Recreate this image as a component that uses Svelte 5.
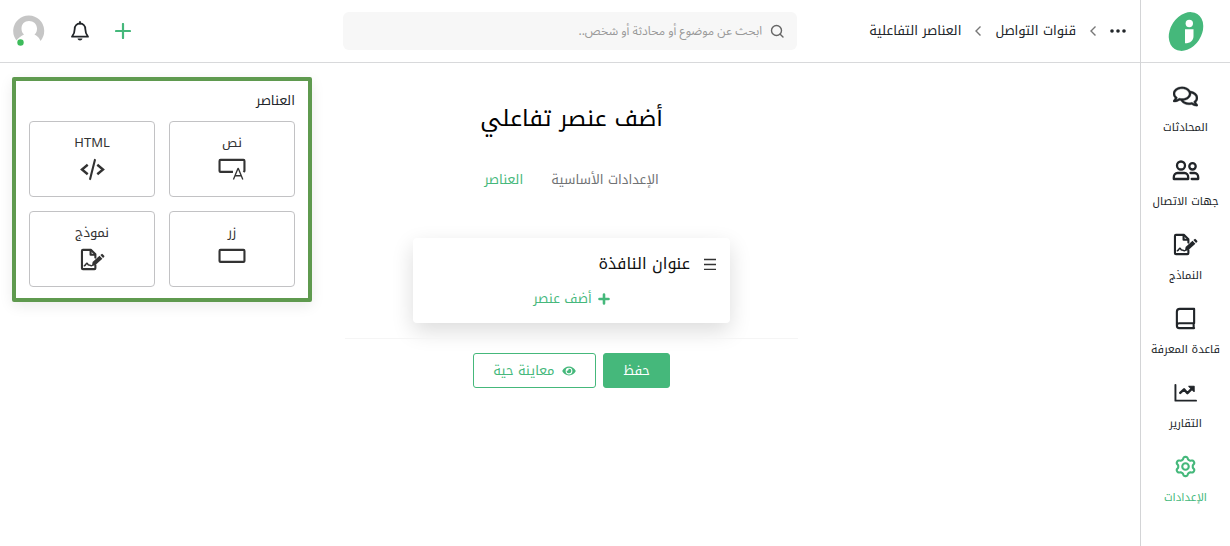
<script>
  const navItems = [
    { id: 'chats', label: 'المحادثات' },
    { id: 'contacts', label: 'جهات الاتصال' },
    { id: 'forms', label: 'النماذج' },
    { id: 'book', label: 'قاعدة المعرفة' },
    { id: 'reports', label: 'التقارير' },
    { id: 'settings', label: 'الإعدادات' }
  ];
  const elements = [
    { id: 'text', label: 'نص' },
    { id: 'html', label: 'HTML' },
    { id: 'button', label: 'زر' },
    { id: 'form', label: 'نموذج' }
  ];
  let active = $state('settings');
  let query = $state('');

  // Outline of a gear with six rounded teeth around the centre of a 24-unit box.
  const gear = Array.from({ length: 96 }, (_, i) => {
    const a = (i / 96) * Math.PI * 2;
    const r = 8.8 + 1.3 * Math.tanh(1.8 * Math.cos(6 * (a + Math.PI / 2)));
    return `${i ? 'L' : 'M'}${(12 + r * Math.cos(a)).toFixed(2)} ${(12 + r * Math.sin(a)).toFixed(2)}`;
  }).join('') + 'Z';
</script>

{#snippet signature()}
  <svg class="ic" viewBox="0 0 26 24" fill="none" stroke="currentColor" stroke-width="2.200" stroke-linejoin="round" stroke-linecap="round">
    <path d="M16 18V21a1 1 0 0 1-1 1H3a1 1 0 0 1-1-1V3a1 1 0 0 1 1-1h8.500L16 6.500V10" />
    <path d="M11 2.500V7h4.500" />
    <path d="M4.500 18.500c1.500-.5 1.800-2.500 2.700-2.500s.8 1.700 1.800 1.700 1 .8 3 .8" stroke-width="1.500" />
    <path d="M12.300 19l.8-4.400 7.200-6.500 3 3.100-7.200 6.500z" fill="currentColor" stroke="none" />
    <path d="M21.200 7.400l1.100-1a1 1 0 0 1 1.400.1l1.500 1.500a1 1 0 0 1-.1 1.400l-1.100 1z" fill="currentColor" stroke="none" />
  </svg>
{/snippet}

<div class="app" dir="rtl">
  <aside>
    <a class="logo" href="#home" aria-label="الرئيسية">
      <svg viewBox="0 0 36 40" width="36" height="40">
        <ellipse cx="18" cy="20.500" rx="15.500" ry="20.800" transform="rotate(33 18 20.500)" fill="#45b87b" />
        <circle cx="21.300" cy="12.500" r="3.700" fill="#fff" />
        <path d="M17 18.300h8.500V25c0 4.500-3 7.300-8.500 7.300z" fill="#fff" />
      </svg>
    </a>
    <nav>
      {#each navItems as item (item.id)}
        <a href="#{item.id}" class:active={active === item.id} onclick={() => (active = item.id)}>
          {#if item.id === 'chats'}
            <svg class="ic" viewBox="0 0 576 512" fill="currentColor" stroke="currentColor" stroke-width="8"><path d="M532 386.200c27.500-27.100 44-61.100 44-98.200 0-80-76.500-146.100-176.200-157.900C368.300 72.500 294.300 32 208 32 93.100 32 0 103.600 0 192c0 37 16.500 71 44 98.200-15.300 30.700-37.300 54.500-37.700 54.900-6.300 6.700-8.100 16.500-4.400 25 3.600 8.500 12 14 21.200 14 53.500 0 96.700-20.200 125.200-38.800 9.200 2.100 18.700 3.700 28.400 4.900C208.100 407.600 281.800 448 368 448c20.800 0 40.800-2.400 59.800-6.800C456.300 459.700 499.400 480 553 480c9.200 0 17.500-5.500 21.200-14 3.600-8.500 1.900-18.300-4.400-25-.4-.3-22.500-24.100-37.800-54.800zm-392.800-92.300L122.100 305c-14.100 9.100-28.500 16.300-43.100 21.400 2.700-4.700 5.400-9.700 8-14.800l15.500-31.100L77.700 256C64.200 242.600 48 220.700 48 192c0-60.700 73.300-112 160-112s160 51.300 160 112-73.300 112-160 112c-16.500 0-33-1.900-49-5.600l-19.800-4.500zM498.300 352l-24.700 24.400 15.500 31.100c2.600 5.100 5.300 10.100 8 14.800-14.600-5.100-29-12.300-43.100-21.400l-17.100-11.100-19.900 4.600c-16 3.700-32.500 5.600-49 5.600-54 0-102.200-20.100-131.300-49.700C338 339.500 416 272.900 416 192c0-3.400-.4-6.700-.7-10C479.700 196.500 528 238.800 528 288c0 28.700-16.200 50.600-29.700 64z" /></svg>
          {:else if item.id === 'contacts'}
            <svg class="ic wide" viewBox="0 0 28 22" fill="none" stroke="currentColor" stroke-width="2.300" stroke-linejoin="round" stroke-linecap="round">
              <circle cx="9" cy="6" r="4" />
              <path d="M1.800 19.500v-1.800C1.800 15.500 3.300 13.500 5.500 13.500h7c2.200 0 3.700 2 3.700 4.200v1.800z" />
              <circle cx="20.500" cy="6.800" r="3.200" />
              <path d="M18.500 13.500h4c2.200 0 3.700 2 3.700 4.200v1.800h-6.500" />
            </svg>
          {:else if item.id === 'forms'}
            {@render signature()}
          {:else if item.id === 'book'}
            <svg class="ic" viewBox="0 0 24 24" fill="none" stroke="currentColor" stroke-width="2.200" stroke-linejoin="round" stroke-linecap="round">
              <path d="M21 17V2H6a3 3 0 0 0-3 3v14.500M21 17H5.500a2.500 2.500 0 0 0 0 5H21M20.500 17v5" />
            </svg>
          {:else if item.id === 'reports'}
            <svg class="ic" viewBox="0 0 24 24" fill="none" stroke="currentColor" stroke-width="2" stroke-linejoin="round" stroke-linecap="round">
              <path d="M1.500 4v16.500h21.500" />
              <path d="M6.500 12.500l4-3.800 3.500 4 5-5" stroke-width="2.500" />
              <path d="M15.500 5.500H21V11z" fill="currentColor" stroke-width="1.200" />
            </svg>
          {:else}
            <svg class="ic" viewBox="0 0 24 24" fill="none" stroke="currentColor" stroke-width="2.200" stroke-linejoin="round">
              <path d={gear} /><circle cx="12" cy="12" r="3.400" />
            </svg>
          {/if}
          <span>{item.label}</span>
        </a>
      {/each}
    </nav>
  </aside>

  <div class="page">
    <header>
      <div class="crumbs">
        <button class="dots" aria-label="المزيد">
          <svg viewBox="0 0 16 4" width="16" height="4" fill="currentColor"><circle cx="2" cy="2" r="1.800" /><circle cx="8" cy="2" r="1.800" /><circle cx="14" cy="2" r="1.800" /></svg>
        </button>
        <svg class="chev" viewBox="0 0 6 10" width="6" height="10"><path d="M5.500 .5L1 5l4.500 4.500" /></svg>
        <a href="#channels">قنوات التواصل</a>
        <svg class="chev" viewBox="0 0 6 10" width="6" height="10"><path d="M5.500 .5L1 5l4.500 4.500" /></svg>
        <a href="#interactive">العناصر التفاعلية</a>
      </div>
      <label class="search">
        <svg viewBox="0 0 14 14" width="14" height="14" fill="none" stroke="#666" stroke-width="1.400" stroke-linecap="round"><circle cx="6.500" cy="6.500" r="5" /><path d="M10.200 10.200L13 13" /></svg>
        <input type="text" bind:value={query} placeholder="ابحث عن موضوع أو محادثة أو شخص.." aria-label="بحث" />
      </label>
      <div class="actions">
        <button class="add" aria-label="إضافة"><svg viewBox="0 0 16 16" width="16" height="16"><path d="M8 1v14M1 8h14" stroke="currentColor" stroke-width="2.200" stroke-linecap="round" /></svg></button>
        <button aria-label="الإشعارات">
          <svg viewBox="0 0 18 20" width="18" height="20" fill="none" stroke="#212529" stroke-width="1.800" stroke-linejoin="round"><path d="M9 2.500c-3.200 0-5.300 2.300-5.300 5.500 0 4.500-1.300 6-2.700 7.700h16c-1.400-1.700-2.700-3.200-2.700-7.700 0-3.200-2.100-5.500-5.300-5.500z" /><path d="M9 1v1.500" stroke-linecap="round" /><path d="M6.500 17.500h5c-.3 1.300-1.200 2-2.500 2s-2.200-.7-2.500-2z" fill="#212529" stroke="none" /></svg>
        </button>
        <button aria-label="الحساب">
          <svg viewBox="0 0 32 32" width="32" height="32">
            <path d="M3.500 25.500A15.500 15.500 0 1 1 27.500 26c-1-3-3-5-6-6.500 2-1.500 2.500-4 2.500-6C24 9 20.500 6 16 6s-7.500 3-7.500 7.500c0 2.500.8 4.500 2.500 6-3 1.500-6 3.500-7.500 6z" fill="#c6c6c6" />
            <circle cx="7.500" cy="27.500" r="3.200" fill="#3dbb5b" />
          </svg>
        </button>
      </div>
    </header>

    <div class="columns">
      <div></div>
      <main>
        <h1>أضف عنصر تفاعلي</h1>
        <div class="tabs">
          <a href="#basic">الإعدادات الأساسية</a>
          <a href="#elements" class="active">العناصر</a>
        </div>
        <section class="card">
          <div class="card-title">
            <svg viewBox="0 0 12 12" width="12" height="12"><path d="M0 1.500h12M0 6.500h12M0 11.500h12" stroke="#333" stroke-width="1.400" /></svg>
            <h2>عنوان النافذة</h2>
          </div>
          <button class="add-item">
            <svg viewBox="0 0 12 12" width="12" height="12"><path d="M6 1.500v9M1.500 6h9" stroke="currentColor" stroke-width="2.600" stroke-linecap="round" /></svg>
            أضف عنصر
          </button>
        </section>
        <div class="buttons">
          <button class="save">حفظ</button>
          <button class="preview">
            <svg viewBox="0 0 576 512" width="14" height="12" fill="currentColor"><path d="M572.500 241.400C518.300 135.600 410.900 64 288 64S57.700 135.600 3.500 241.400a32.400 32.400 0 0 0 0 29.200C57.700 376.400 165.100 448 288 448s230.300-71.600 284.500-177.400a32.400 32.400 0 0 0 0-29.200zM288 400a144 144 0 1 1 144-144 143.900 143.900 0 0 1-144 144zm0-240a95.300 95.300 0 0 0-25.300 3.800 47.900 47.900 0 0 1-66.900 66.900A95.800 95.800 0 1 0 288 160z" /></svg>
            معاينة حية
          </button>
        </div>
      </main>
      <div class="side">
        <section class="panel">
          <h3>العناصر</h3>
          <div class="grid">
            {#each elements as el (el.id)}
              <button class="tile">
                <span>{el.label}</span>
                {#if el.id === 'text'}
                  <svg class="ic wide" viewBox="0 0 28 24" fill="none" stroke="currentColor" stroke-width="2.200" stroke-linejoin="round">
                    <path d="M15 14.500H2a1 1 0 0 1-1-1V3a1 1 0 0 1 1-1h24a1 1 0 0 1 1 1v10.500l-1 1" />
                    <path d="M15.500 22.500l4.700-11.500h.4l4.700 11.500M17.500 18.500h6" stroke-width="1.400" />
                  </svg>
                {:else if el.id === 'html'}
                  <svg class="ic" viewBox="0 0 26 24" fill="none" stroke="currentColor" stroke-width="2.500"><path d="M8 7l-6 5 6 5M18 7l6 5-6 5" /><path d="M15.500 2l-5 20" stroke-linecap="round" stroke-width="2.200" /></svg>
                {:else if el.id === 'button'}
                  <svg class="ic wide" viewBox="0 0 28 24" fill="none" stroke="currentColor" stroke-width="2.200"><rect x="1" y="2" width="26" height="12.500" rx="1" /></svg>
                {:else}
                  {@render signature()}
                {/if}
              </button>
            {/each}
          </div>
        </section>
      </div>
    </div>
  </div>
</div>

<style>
  :global(body) { margin: 0; background: #fff; }
  .app {
    display: flex;
    min-height: 100vh;
    font-family: "Noto Kufi Arabic", "Noto Sans Arabic", "Noto Sans", "DejaVu Sans", sans-serif;
    font-size: 13px;
    color: #212529;
  }
  a { color: inherit; text-decoration: none; }
  button { font: inherit; color: inherit; background: none; border: 0; padding: 0; cursor: pointer; }
  svg { display: block; flex: none; }
  h1, h2, h3 { margin: 0; font-weight: 400; }

  aside { flex: 0 0 89px; border-left: 1px solid #d3d4d6; }
  .logo { display: flex; align-items: center; justify-content: center; height: 62px; border-bottom: 1px solid #d8d9db; }
  nav { display: flex; flex-direction: column; padding-top: 22px; }
  nav a { display: flex; flex-direction: column; align-items: center; gap: 10px; height: 74px; font-size: 11px; line-height: 20px; white-space: nowrap; }
  nav a.active { color: #45b87b; }
  .ic { width: 25px; height: 23px; }
  .ic.wide { width: 28px; }

  .page { flex: 1; min-width: 0; }
  header, .columns { display: grid; grid-template-columns: 3fr 4fr 3fr; }
  header { height: 62px; align-items: center; border-bottom: 1px solid #d8d9db; }
  .crumbs { display: flex; align-items: center; gap: 14px; padding-right: 14px; white-space: nowrap; line-height: 20px; }
  .chev { fill: none; stroke: #777; stroke-width: 1.4; }
  .search { display: flex; align-items: center; gap: 8px; height: 38px; padding: 0 13px; margin: 0 1px; border-radius: 6px; background: #f7f7f7; }
  .search input { flex: 1; min-width: 0; border: 0; padding: 0; background: none; outline: 0; font: 12px "Noto Sans Arabic", "Noto Sans", "DejaVu Sans", sans-serif; color: #333; }
  .search input::placeholder { color: #999; opacity: 1; }
  .actions { display: flex; align-items: center; justify-content: flex-end; gap: 26px; padding-left: 13px; }
  .add { color: #45b87b; }

  main { padding: 36px 0 0 3px; text-align: center; }
  h1 { font-size: 23px; line-height: 40px; color: #000; }
  .tabs { display: flex; justify-content: center; gap: 28px; margin-top: 31px; line-height: 20px; color: #707274; }
  .tabs .active { color: #45b87b; }
  .card { width: 70%; box-sizing: border-box; margin: 48px auto 0; padding: 12px 14px 14px; border-radius: 4px; background: #fff; box-shadow: 0 8px 22px rgba(0, 0, 0, 0.14); }
  .card-title { display: flex; align-items: center; gap: 14px; }
  h2 { font-size: 16px; line-height: 28px; color: #111; }
  .add-item { display: flex; align-items: center; gap: 6px; margin: 11px auto 0; line-height: 20px; color: #45b87b; }
  .buttons { display: flex; justify-content: center; gap: 7px; margin-top: 15px; padding-top: 14px; border-top: 1px solid #f5f5f5; }
  .buttons button { display: flex; align-items: center; justify-content: center; gap: 8px; height: 35px; padding: 0 19px; border: 1px solid #45b87b; border-radius: 3px; color: #45b87b; white-space: nowrap; }
  .buttons .save { background: #45b87b; color: #fff; }

  .side { padding: 14px 30px 0 12px; }
  .panel { padding: 8px 13px 11px; border: 4px solid #5f9a4f; border-radius: 2px; box-shadow: 0 4px 14px rgba(0, 0, 0, 0.08); }
  h3 { font-size: 13px; line-height: 24px; padding-bottom: 8px; }
  .grid { display: grid; grid-template-columns: 1fr 1fr; gap: 14px; }
  .tile { display: flex; flex-direction: column; align-items: center; gap: 5px; height: 76px; padding-top: 11px; border: 1px solid #c2c2c4; border-radius: 4px; line-height: 20px; color: #333; }
</style>
